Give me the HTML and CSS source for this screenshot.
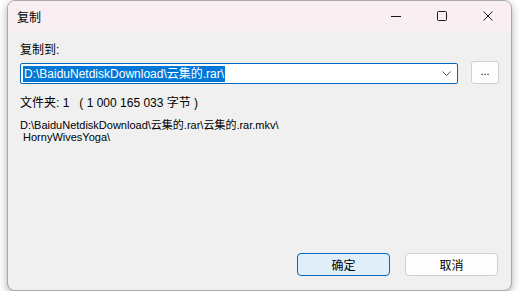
FILE: index.html
```html
<!DOCTYPE html>
<html lang="zh-CN">
  <head>
    <meta charset="utf-8" />
    <title>复制</title>
    <link rel="stylesheet" href="styles.css">
  </head>
  <body>
    <div class="window">
      <!-- 标题栏 -->
      <div class="titlebar">
        <span class="title">复制</span>
        <div class="caption-buttons">
          <span class="caption-btn">
            <svg width="10" height="10" viewBox="0 0 10 10"><path d="M0 5.5h10" stroke="#1a1a1a" stroke-width="1" /></svg>
          </span>
          <span class="caption-btn">
            <svg width="10" height="10" viewBox="0 0 10 10"><rect x="0.5" y="0.5" width="9" height="9" rx="1" fill="none" stroke="#1a1a1a" stroke-width="1" /></svg>
          </span>
          <span class="caption-btn">
            <svg width="10" height="10" viewBox="0 0 10 10"><path d="M0.5 0.5l9 9M9.5 0.5l-9 9" stroke="#1a1a1a" stroke-width="1" /></svg>
          </span>
        </div>
      </div>

      <!-- 본문 -->
      <div class="content">
        <p class="label">复制到:</p>
        <div class="target-row">
          <div class="combo">
            <span class="combo-value">D:\BaiduNetdiskDownload\云集的.rar\</span>
            <svg class="chevron" width="9" height="5" viewBox="0 0 9 5"><path d="M0.5 0.5l4 4 4-4" fill="none" stroke="#555" stroke-width="1" /></svg>
          </div>
          <button class="browse-btn">...</button>
        </div>
        <p class="summary">文件夹: 1&nbsp;&nbsp;&nbsp;( 1 000 165 033 字节 )</p>
        <p class="source-path">D:\BaiduNetdiskDownload\云集的.rar\云集的.rar.mkv\<br />&nbsp;HornyWivesYoga\</p>
      </div>

      <div class="footer">
        <button class="btn btn-primary">确定</button>
        <button class="btn">取消</button>
      </div>
    </div>
  </body>
</html>
```

FILE: styles.css
```css
/* 기본 */
body {
  margin: 0;
  background-color: #ffffff;
  font-family: "Liberation Sans", "Noto Sans CJK SC", sans-serif;
  color: #000000;
}

p {
  margin: 0;
}

/* 창 */
.window {
  box-sizing: border-box;
  display: flex;
  flex-direction: column;
  width: 505px;
  height: 291px;
  margin-left: 7px;
  border: 1px solid #a9a9a9;
  border-radius: 8px;
  overflow: hidden;
  background-color: #f0f0f0;
  box-shadow: 0 3px 9px rgba(0, 0, 0, 0.32);
}

.titlebar {
  display: flex;
  align-items: center;
  height: 30px;
  background-color: #f9eff3;
}

.title {
  padding-left: 9px;
  font-size: 12px;
}

.caption-buttons {
  display: flex;
  margin-left: auto;
}

.caption-btn {
  display: flex;
  justify-content: center;
  align-items: center;
  width: 46px;
  height: 30px;
}

/* 내용 */
.content {
  flex: 1;
  padding: 11px 12px 0 12px;
}

.label {
  font-size: 12px;
  line-height: 16px;
}

.target-row {
  display: flex;
  align-items: flex-end;
  margin-top: 3px;
}

.combo {
  box-sizing: border-box;
  display: flex;
  align-items: center;
  width: 438px;
  height: 21px;
  padding: 0 6px 0 2px;
  border: 1px solid #0067c0;
  border-radius: 2px;
  background-color: #ffffff;
}

.combo-value {
  padding: 0 1px;
  font-size: 12px;
  line-height: 16px;
  color: #ffffff;
  background-color: #0078d7;
}

.chevron {
  margin-left: auto;
}

.browse-btn {
  box-sizing: border-box;
  width: 28px;
  height: 23px;
  margin-left: 13px;
  padding: 0 0 4px;
  border: 1px solid #d0d0d0;
  border-radius: 3px;
  background-color: #fdfdfd;
  font-family: inherit;
  font-size: 11px;
}

.summary {
  margin-top: 11px;
  font-size: 12px;
  line-height: 16px;
}

.source-path {
  margin-top: 8px;
  font-size: 11px;
  line-height: 12px;
}

/* 하단 버튼 */
.footer {
  display: flex;
  justify-content: flex-end;
  gap: 15px;
  padding: 0 13px 14px 0;
}

.btn {
  box-sizing: border-box;
  width: 93px;
  height: 23px;
  border: 1px solid #d0d0d0;
  border-radius: 4px;
  background-color: #fdfdfd;
  font-family: inherit;
  font-size: 12px;
}

.btn-primary {
  border-color: #0067c0;
  background-color: #e0eef9;
}
```
